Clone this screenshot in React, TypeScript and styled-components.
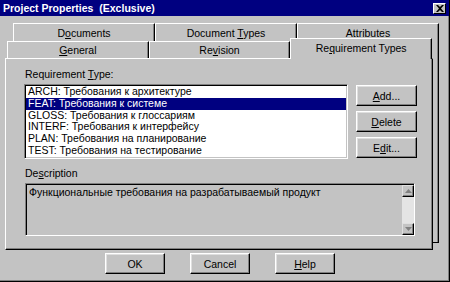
import React from "react";
import styled, { createGlobalStyle } from "styled-components";

const FACE = "#c3c3c3";
const NAVY = "#000080";

const GlobalStyle = createGlobalStyle`
    html, body {
        margin: 0;
        padding: 0;
        background: ${FACE};
    }
    body {
        font-family: "Liberation Sans", Arial, sans-serif;
        font-size: 10.5px;
        color: #000;
    }
    * {
        box-sizing: border-box;
    }
`;

const requirementTypes = [
    "ARCH: Требования к архитектуре",
    "FEAT: Требования к системе",
    "GLOSS: Требования к глоссариям",
    "INTERF: Требования к интерфейсу",
    "PLAN: Требования на планирование",
    "TEST: Требования на тестирование",
];

const Mnemonic = ({ text, at }: { text: string; at: number }) => (
    <span>
        {text.slice(0, at)}
        <u>{text.charAt(at)}</u>
        {text.slice(at + 1)}
    </span>
);

const App = () => {
    const selected = 1;

    return (
        <>
            <GlobalStyle />
            <Window>
                <TitleBar>
                    <Title>Project Properties&nbsp; (Exclusive)</Title>
                    <CloseBox>
                        <svg width="8" height="7" viewBox="0 0 8 7">
                            <path
                                d="M0 0h2l2 2 2-2h2L5 3.5 8 7H6L4 5 2 7H0l3-3.5z"
                                fill="#000"
                            />
                        </svg>
                    </CloseBox>
                </TitleBar>

                <Body>
                    <TabStack>
                        <TabRow>
                            <Tab>
                                <Mnemonic text="Documents" at={1} />
                            </Tab>
                            <Tab>
                                <Mnemonic text="Document Types" at={9} />
                            </Tab>
                            <Tab>
                                <Mnemonic text="Attributes" at={6} />
                            </Tab>
                        </TabRow>

                        <BackPage>
                            <FrontRow>
                                <Tab>
                                    <Mnemonic text="General" at={0} />
                                </Tab>
                                <Tab>
                                    <Mnemonic text="Revision" at={2} />
                                </Tab>
                                <Tab $active>
                                    <Mnemonic text="Requirement Types" at={2} />
                                </Tab>
                            </FrontRow>

                            <Page>
                                <FieldLabel>
                                    <Mnemonic text="Requirement Type:" at={12} />
                                </FieldLabel>
                                <ListRow>
                                    <ListBox>
                                        {requirementTypes.map((item, i) => (
                                            <ListItem
                                                key={item}
                                                $selected={i === selected}
                                            >
                                                {item}
                                            </ListItem>
                                        ))}
                                    </ListBox>
                                    <SideButtons>
                                        <Button $width={61}>
                                            <Mnemonic text="Add..." at={0} />
                                        </Button>
                                        <Button $width={61}>
                                            <Mnemonic text="Delete" at={0} />
                                        </Button>
                                        <Button $width={61}>
                                            <Mnemonic text="Edit..." at={1} />
                                        </Button>
                                    </SideButtons>
                                </ListRow>

                                <FieldLabel $top={8}>
                                    <Mnemonic text="Description" at={2} />
                                </FieldLabel>
                                <DescriptionBox>
                                    <DescriptionText>
                                        Функциональные требования на
                                        разрабатываемый продукт
                                    </DescriptionText>
                                    <ScrollBar>
                                        <ScrollArrow>
                                            <svg width="7" height="4" viewBox="0 0 7 4">
                                                <path d="M3.5 0L7 4H0z" fill="#808080" />
                                            </svg>
                                        </ScrollArrow>
                                        <ScrollTrack />
                                        <ScrollArrow>
                                            <svg width="7" height="4" viewBox="0 0 7 4">
                                                <path d="M0 0h7L3.5 4z" fill="#808080" />
                                            </svg>
                                        </ScrollArrow>
                                    </ScrollBar>
                                </DescriptionBox>
                            </Page>
                        </BackPage>
                    </TabStack>

                    <ButtonRow>
                        <Button $width={60}>OK</Button>
                        <Button $width={60}>Cancel</Button>
                        <Button $width={60}>
                            <Mnemonic text="Help" at={0} />
                        </Button>
                    </ButtonRow>
                </Body>
            </Window>
        </>
    );
};

const Window = styled.div`
    display: flex;
    flex-direction: column;
    width: 450px;
    height: 282px;
    background: ${FACE};
    border-right: 1px solid #000;
    border-bottom: 1px solid #000;
    box-shadow: inset -1px -1px #808080;
    overflow: hidden;
`;

const TitleBar = styled.div`
    display: flex;
    align-items: center;
    justify-content: space-between;
    height: 16px;
    padding: 0 3px;
    background: ${NAVY};
`;

const Title = styled.span`
    color: #fff;
    font-weight: 700;
    font-size: 10.5px;
`;

const CloseBox = styled.div`
    display: flex;
    align-items: center;
    justify-content: center;
    width: 13px;
    height: 11px;
    background: ${FACE};
    border-top: 1px solid #fff;
    border-left: 1px solid #fff;
    border-right: 1px solid #000;
    border-bottom: 1px solid #000;
`;

const Body = styled.div`
    display: flex;
    flex-direction: column;
    padding: 7px 0 0 5px;
`;

const TabStack = styled.div`
    display: flex;
    flex-direction: column;
    width: 426px;
    margin-left: 8px;
`;

const TabRow = styled.div`
    display: flex;
    height: 18px;
`;

const FrontRow = styled.div`
    display: flex;
    align-items: flex-end;
    width: 425px;
    height: 17px;
    margin-left: -6px;
`;

const Tab = styled.div<{ $active?: boolean }>`
    position: relative;
    z-index: ${({ $active }) => ($active ? 2 : 0)};
    flex: 1;
    display: flex;
    align-items: center;
    justify-content: center;
    height: ${({ $active }) => ($active ? "21px" : "100%")};
    margin-bottom: ${({ $active }) => ($active ? "-1px" : "0")};
    padding-bottom: ${({ $active }) => ($active ? "3px" : "0")};
    background: ${FACE};
    border-top: 1px solid #fff;
    border-left: 1px solid #fff;
    border-right: 1px solid #000;
    box-shadow: inset -1px 0 #808080;
    color: #000;
    white-space: nowrap;
`;

const BackPage = styled.div`
    display: flex;
    flex-direction: column;
    border-right: 1px solid #000;
    border-bottom: 1px solid #000;
    box-shadow: inset -1px 0 #808080;
`;

const Page = styled.div`
    position: relative;
    z-index: 1;
    display: flex;
    flex-direction: column;
    width: 428px;
    height: 192px;
    margin-left: -8px;
    margin-bottom: -8px;
    padding: 9px 0 0 18px;
    background: ${FACE};
    border-top: 1px solid #fff;
    border-left: 1px solid #fff;
    border-right: 1px solid #000;
    border-bottom: 1px solid #000;
    box-shadow: inset -1px -1px #808080;
`;

const FieldLabel = styled.div<{ $top?: number }>`
    height: 13px;
    line-height: 13px;
    margin-top: ${({ $top }) => $top ?? 0}px;
    margin-bottom: 3px;
    margin-left: 1px;
`;

const ListRow = styled.div`
    display: flex;
    gap: 8px;
`;

const ListBox = styled.div`
    display: flex;
    flex-direction: column;
    width: 324px;
    height: 75px;
    padding: 1px 1px 0;
    background: #fff;
    border-top: 1px solid #808080;
    border-left: 1px solid #808080;
    border-right: 1px solid #fff;
    border-bottom: 1px solid #fff;
    box-shadow: inset 1px 1px #000, inset -1px -1px ${FACE};
    overflow: hidden;
`;

const ListItem = styled.div<{ $selected?: boolean }>`
    flex: none;
    height: 11.8px;
    line-height: 11.8px;
    padding-left: 2px;
    background: ${({ $selected }) => ($selected ? NAVY : "transparent")};
    color: ${({ $selected }) => ($selected ? "#fff" : "#000")};
    white-space: nowrap;
`;

const SideButtons = styled.div`
    display: flex;
    flex-direction: column;
    gap: 5px;
    margin-top: 1px;
`;

const Button = styled.div<{ $width: number }>`
    display: flex;
    align-items: center;
    justify-content: center;
    width: ${({ $width }) => $width}px;
    height: 21px;
    background: ${FACE};
    border-top: 1px solid #fff;
    border-left: 1px solid #fff;
    border-right: 1px solid #000;
    border-bottom: 1px solid #000;
    box-shadow: inset -1px -1px #808080, inset 1px 1px #dfdfdf;
    color: #000;
`;

const DescriptionBox = styled.div`
    display: flex;
    width: 390px;
    height: 53px;
    margin-left: 1px;
    border-top: 1px solid #808080;
    border-left: 1px solid #808080;
    border-right: 1px solid #fff;
    border-bottom: 1px solid #fff;
    box-shadow: inset 1px 1px #000;
`;

const DescriptionText = styled.div`
    flex: 1;
    padding: 2px 0 0 3px;
    line-height: 13px;
    white-space: nowrap;
`;

const ScrollBar = styled.div`
    display: flex;
    flex-direction: column;
    width: 12px;
    margin-top: 1px;
`;

const ScrollArrow = styled.div`
    display: flex;
    align-items: center;
    justify-content: center;
    height: 12px;
    background: ${FACE};
    border-top: 1px solid #dfdfdf;
    border-left: 1px solid #dfdfdf;
    border-right: 1px solid #000;
    border-bottom: 1px solid #000;
    box-shadow: inset -1px -1px #808080;
`;

const ScrollTrack = styled.div`
    flex: 1;
    background: #e4e4e4;
`;

const ButtonRow = styled.div`
    display: flex;
    gap: 25px;
    margin-top: 10px;
    padding-left: 100px;
`;

export default App;
